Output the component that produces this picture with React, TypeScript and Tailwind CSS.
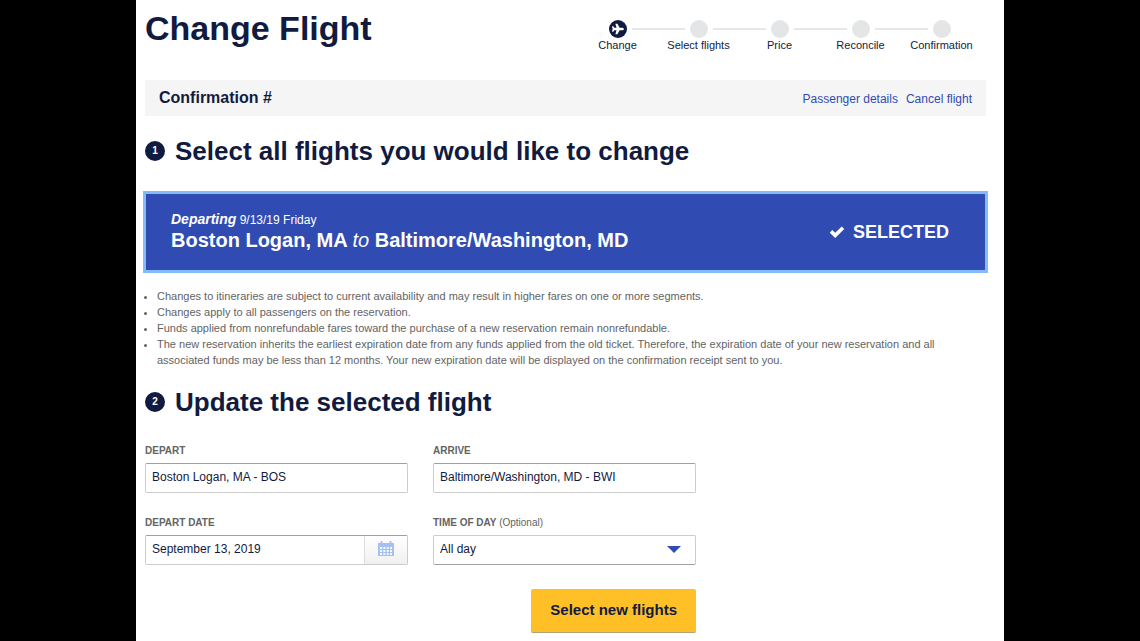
import React, { useState } from 'react'
import { FaPlane } from 'react-icons/fa'

const steps = ['Change', 'Select flights', 'Price', 'Reconcile', 'Confirmation']

const notes = [
    'Changes to itineraries are subject to current availability and may result in higher fares on one or more segments.',
    'Changes apply to all passengers on the reservation.',
    'Funds applied from nonrefundable fares toward the purchase of a new reservation remain nonrefundable.',
    'The new reservation inherits the earliest expiration date from any funds applied from the old ticket. Therefore, the expiration date of your new reservation and all associated funds may be less than 12 months. Your new expiration date will be displayed on the confirmation receipt sent to you.',
]

const fieldBox =
    'block w-full h-[30px] rounded-xs border border-[#cccccc] bg-white px-[6px] pb-[2px] text-xs text-[#111b40]'

function ProgressSteps() {
    return (
        <ol className="mt-3 mr-1 grid w-[405px] grid-cols-5">
            {steps.map((step, i) => (
                <li key={step} className="flex flex-col items-center">
                    <div className="flex w-full items-center">
                        <span className={`mr-[5px] h-[2px] flex-1 ${i > 0 ? 'bg-[#e6e7e8]' : ''}`} />
                        <span
                            className={`flex size-[18px] items-center justify-center rounded-full ${
                                i === 0 ? 'bg-[#111b40] text-white' : 'bg-[#e4e5e6]'
                            }`}
                        >
                            {i === 0 && <FaPlane className="size-3" />}
                        </span>
                        <span
                            className={`ml-[5px] h-[2px] flex-1 ${i < steps.length - 1 ? 'bg-[#e6e7e8]' : ''}`}
                        />
                    </div>
                    <span className="text-[11px] leading-[14px] whitespace-nowrap">{step}</span>
                </li>
            ))}
        </ol>
    )
}

function SectionHeading({ number, children }: { number: number; children: React.ReactNode }) {
    return (
        <h2 className="flex items-center gap-[10px] text-[26px] leading-8 font-bold">
            <span className="flex size-5 shrink-0 items-center justify-center rounded-full bg-[#111b40] text-[10px] text-white">
                {number}
            </span>
            {children}
        </h2>
    )
}

function FieldLabel({ htmlFor, children }: { htmlFor: string; children: React.ReactNode }) {
    return (
        <label htmlFor={htmlFor} className="mb-1 block text-[10px] leading-4 font-bold text-[#636363]">
            {children}
        </label>
    )
}

function CheckIcon() {
    return (
        <svg viewBox="0 0 16 12" className="h-3 w-4" aria-hidden="true">
            <path fill="none" stroke="currentColor" strokeWidth="3.6" d="M2 5.4l4.2 4L14 1.8" />
        </svg>
    )
}

function CalendarIcon() {
    return (
        <svg viewBox="0 0 16 16" className="size-4" aria-hidden="true">
            <path fill="#a6c0f4" d="M0 2h16v13H0z" />
            <path fill="#a6c0f4" d="M2.5 0h2v3h-2zM11.5 0h2v3h-2z" />
            <path
                fill="#f4f8ff"
                d="M2 6h2v2H2zM5.3 6h2v2h-2zM8.7 6h2v2h-2zM12 6h2v2h-2zM2 9h2v2H2zM5.3 9h2v2h-2zM8.7 9h2v2h-2zM12 9h2v2h-2zM2 12h2v2H2zM5.3 12h2v2h-2zM8.7 12h2v2h-2zM12 12h2v2h-2z"
            />
        </svg>
    )
}

export default function App() {
    const [selected, setSelected] = useState(true)

    return (
        <div className="min-h-screen bg-black font-['Liberation_Sans',Arial,sans-serif] text-[#111b40]">
            <main className="mx-auto min-h-screen max-w-[868px] bg-white pt-2 pr-[18px] pb-2 pl-[9px]">
                <header className="flex items-start justify-between">
                    <h1 className="text-[34px] leading-10 font-bold">Change Flight</h1>
                    <ProgressSteps />
                </header>

                <div className="mt-7 flex h-9 items-center justify-between bg-[#f5f5f5] px-[14px]">
                    <h3 className="text-base font-bold">Confirmation #</h3>
                    <nav className="flex gap-2 pt-[2px] text-xs text-[#304cb2]">
                        <a href="#passengers">Passenger details</a>
                        <a href="#cancel">Cancel flight</a>
                    </nav>
                </div>

                <section className="mt-[19px]">
                    <SectionHeading number={1}>Select all flights you would like to change</SectionHeading>
                    <div className="mt-[27px] px-px">
                        <button
                            type="button"
                            aria-pressed={selected}
                            onClick={() => setSelected(!selected)}
                            className="flex h-[76px] w-full items-center justify-between bg-[#304cb2] pr-9 pl-[25px] text-left text-white ring-3 ring-[#84bcfb]"
                        >
                            <span className="pb-[6px]">
                                <span className="block text-xs leading-5">
                                    <b className="text-sm leading-5 italic">Departing</b> 9/13/19 Friday
                                </span>
                                <span className="block text-xl leading-5 font-bold">
                                    Boston Logan, MA <i className="font-normal">to</i> Baltimore/Washington, MD
                                </span>
                            </span>
                            <span className="flex items-center gap-2 text-lg font-bold">
                                {selected && <CheckIcon />}
                                {selected ? 'SELECTED' : 'SELECT'}
                            </span>
                        </button>
                    </div>
                    <ul className="mt-[18px] list-disc pl-3 text-[11px] leading-4 text-[#636363]">
                        {notes.map((note) => (
                            <li key={note}>{note}</li>
                        ))}
                    </ul>
                </section>

                <section className="mt-[18px]">
                    <SectionHeading number={2}>Update the selected flight</SectionHeading>
                    <form className="mt-[25px] max-w-[551px]" onSubmit={(e) => e.preventDefault()}>
                        <div className="grid grid-cols-2 gap-x-[25px] gap-y-[22px]">
                            <div>
                                <FieldLabel htmlFor="depart">DEPART</FieldLabel>
                                <input
                                    id="depart"
                                    defaultValue="Boston Logan, MA - BOS"
                                    className={`${fieldBox} border-t-[#a0a0a0]`}
                                />
                            </div>
                            <div>
                                <FieldLabel htmlFor="arrive">ARRIVE</FieldLabel>
                                <input
                                    id="arrive"
                                    defaultValue="Baltimore/Washington, MD - BWI"
                                    className={`${fieldBox} border-t-[#a0a0a0]`}
                                />
                            </div>
                            <div>
                                <FieldLabel htmlFor="date">DEPART DATE</FieldLabel>
                                <div className="flex h-[30px] overflow-hidden rounded-xs border border-[#cccccc] border-t-[#a0a0a0]">
                                    <input
                                        id="date"
                                        defaultValue="September 13, 2019"
                                        className="min-w-0 flex-1 bg-white px-[6px] pb-[2px] text-xs"
                                    />
                                    <button
                                        type="button"
                                        aria-label="Open calendar"
                                        className="flex w-[43px] items-center justify-center border-l border-[#dddddd] bg-linear-to-b from-white to-[#f0f0f0] pb-[2px]"
                                    >
                                        <CalendarIcon />
                                    </button>
                                </div>
                            </div>
                            <div>
                                <FieldLabel htmlFor="time">
                                    TIME OF DAY <span className="font-normal">(Optional)</span>
                                </FieldLabel>
                                <div className="relative">
                                    <select
                                        id="time"
                                        className={`${fieldBox} appearance-none border-b-[#a0a0a0]`}
                                    >
                                        <option>All day</option>
                                        <option>Before noon</option>
                                        <option>Noon - 6pm</option>
                                        <option>After 6pm</option>
                                    </select>
                                    <svg
                                        viewBox="0 0 14 7"
                                        className="pointer-events-none absolute top-[11px] right-[15px] h-[7px] w-[14px]"
                                        aria-hidden="true"
                                    >
                                        <path fill="#304cb2" d="M0 0h14L7 7z" />
                                    </svg>
                                </div>
                            </div>
                        </div>
                        <div className="mt-6 flex justify-end">
                            <button
                                type="submit"
                                className="h-11 rounded-xs border-b border-[#b3a27a] bg-[#ffbf27] px-[19px] text-[15px] font-bold"
                            >
                                Select new flights
                            </button>
                        </div>
                    </form>
                </section>
            </main>
        </div>
    )
}
